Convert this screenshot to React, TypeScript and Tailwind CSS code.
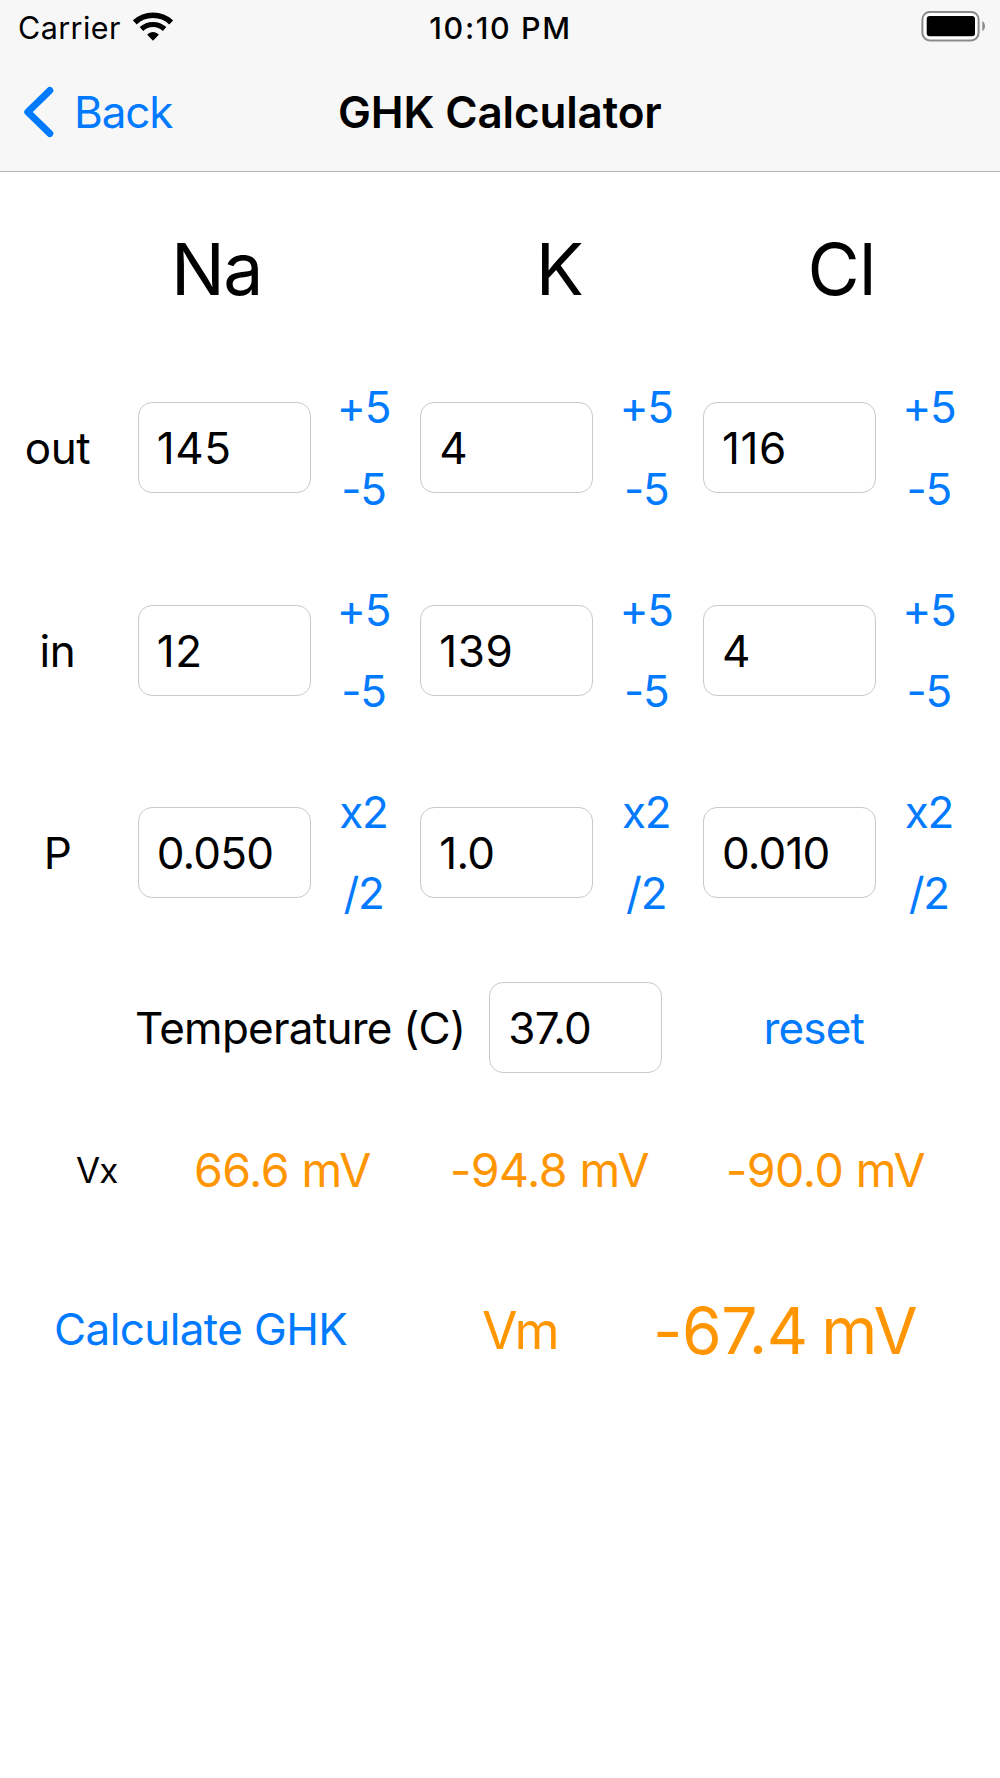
import { useState } from "react";

type Cell = { id: string; value: string };
type Row = { label: string; up: string; down: string; cells: Cell[] };

const rows: Row[] = [
  {
    label: "out",
    up: "+5",
    down: "-5",
    cells: [
      { id: "na-out", value: "145" },
      { id: "k-out", value: "4" },
      { id: "cl-out", value: "116" },
    ],
  },
  {
    label: "in",
    up: "+5",
    down: "-5",
    cells: [
      { id: "na-in", value: "12" },
      { id: "k-in", value: "139" },
      { id: "cl-in", value: "4" },
    ],
  },
  {
    label: "P",
    up: "x2",
    down: "/2",
    cells: [
      { id: "na-p", value: "0.050" },
      { id: "k-p", value: "1.0" },
      { id: "cl-p", value: "0.010" },
    ],
  },
];

const WifiIcon = () => (
  <svg width="40" height="30" viewBox="0 0 40 30" fill="none" stroke="#000">
    <path d="M1.8 10.4C12 .9 28 .9 38.2 10.4" strokeWidth="5.6" />
    <path d="M8.4 17C15 11 25 11 31.6 17" strokeWidth="5.2" />
    <path d="M14.2 22.8C17.4 19.2 22.6 19.2 25.8 22.8L20 28.8Z" fill="#000" stroke="none" />
  </svg>
);

const BatteryIcon = () => (
  <svg width="65" height="32" viewBox="0 0 65 32" fill="none">
    <rect x="1.4" y="0.9" width="56.2" height="28.6" rx="7.5" fill="#fff" stroke="#8a8a8a" strokeWidth="2" />
    <rect x="5.7" y="4.9" width="48.3" height="20.4" rx="3" fill="#000" />
    <path d="M61.3 10.3C64.9 12 64.9 18.4 61.3 20Z" fill="#8a8a8a" />
  </svg>
);

const Field: React.FC<{ value: string }> = ({ value }) => (
  <div
    className={`flex h-[91px] w-[173px] shrink-0 items-center rounded-[14px] border border-[#c9c9c9] bg-white pt-px pl-[18px] ${
      value.includes(".") ? "tracking-[-0.8px]" : "tracking-[0.6px]"
    }`}
  >
    {value}
  </div>
);

const App: React.FC = () => {
  const [temperature] = useState("37.0");

  return (
    <div className="h-[1778px] w-[1000px] overflow-hidden bg-white font-['Inter',sans-serif] text-[44px] leading-none whitespace-nowrap text-black">
      <header className="h-[172px] border-b border-[#b2b2b2] bg-[#f7f7f7]">
        {/* Status bar */}
        <div className="grid h-[54px] grid-cols-3 items-center pr-[14px] pl-[18px] text-[30.5px]">
          <div className="flex items-center gap-[12px]">
            <span className="pt-[2px] tracking-[0.4px]">Carrier</span>
            <WifiIcon />
          </div>
          <span className="pt-[2px] pr-[3px] text-center font-medium tracking-[1.6px]">10:10 PM</span>
          <div className="flex justify-end">
            <BatteryIcon />
          </div>
        </div>

        {/* Navigation bar */}
        <div className="grid h-[116px] grid-cols-[338px_1fr] items-center">
          <button className="flex items-center gap-[20px] pl-[23px] text-[#007aff]">
            <svg width="31" height="52" viewBox="0 0 31 52" fill="none">
              <path d="M26.8 4.5L4.8 26L26.8 47.5" stroke="currentColor" strokeWidth="7" strokeLinecap="round" strokeLinejoin="round" />
            </svg>
            <span className="tracking-[-1.1px]">Back</span>
          </button>
          <h1 className="font-semibold tracking-[-0.15px]">GHK Calculator</h1>
        </div>
      </header>

      <main>
        <div className="grid h-[174.67px] grid-cols-[433px_252px_313px] items-center pt-[20px] text-center text-[71.5px] tracking-[-1.5px]">
          <span>Na</span>
          <span>K</span>
          <span className="tracking-[-0.8px]">Cl</span>
        </div>

        {rows.map((row) => (
          <div key={row.label} className="flex h-[202.4px] items-center">
            <span className="mr-[22.67px] w-[115px] pt-px text-center tracking-[-0.4px]">{row.label}</span>
            {row.cells.map((cell) => (
              <div key={cell.id} className="flex w-[282.67px] items-center">
                <Field value={cell.value} />
                <div className="flex flex-1 flex-col pr-[4px] text-center tracking-[-1.3px] text-[#007aff]">
                  <button className="h-[81.33px]">{row.up}</button>
                  <button className="h-[81.33px]">{row.down}</button>
                </div>
              </div>
            ))}
          </div>
        ))}

        <div className="flex h-[146.8px] items-center pl-[135px]">
          <span className="w-[354.33px] pt-px tracking-[-0.75px]">Temperature (C)</span>
          <Field value={temperature} />
          <button className="w-[303px] pt-px tracking-[-0.8px] text-[#007aff]">reset</button>
        </div>

        <div className="grid h-[137px] grid-cols-[118px_256px_276px_1fr] items-center pt-[2px] pl-[76px] text-[46.5px] tracking-[-0.55px] text-[#ff9500]">
          <span className="text-[35px] tracking-[-1px] text-black">Vx</span>
          <span>66.6 mV</span>
          <span>-94.8 mV</span>
          <span>-90.0 mV</span>
        </div>

        <div className="grid h-[183px] grid-cols-[428px_171px_1fr] items-center pl-[54px] text-[#ff9500]">
          <button className="text-left tracking-[-0.6px] text-[#007aff]">Calculate GHK</button>
          <span className="pt-[4px] text-[51.5px] tracking-[-3px]">Vm</span>
          <span className="pt-[4px] text-[64px] tracking-[-0.5px] [word-spacing:-4px]">-67.4 mV</span>
        </div>
      </main>
    </div>
  );
};

export default App;
